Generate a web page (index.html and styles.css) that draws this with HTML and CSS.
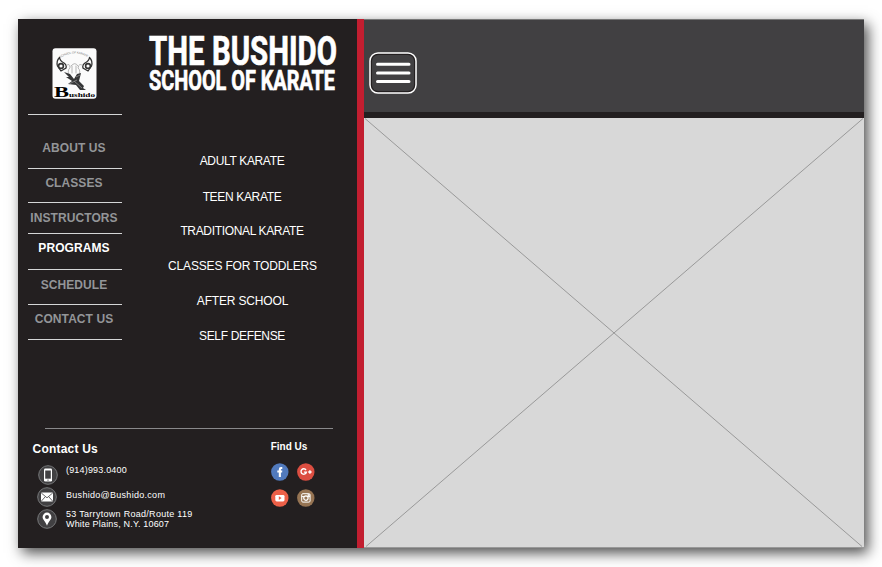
FILE: index.html
```html
<!DOCTYPE html>
<html lang="en">
<head>
<meta charset="utf-8">
<title>The Bushido School of Karate</title>
<link rel="stylesheet" href="styles.css">
</head>
<body>
<div class="app">
  <aside class="sidebar">
    <header class="brand">
      <svg class="logo" width="45" height="51" viewBox="0 0 45 51">
        <defs><path id="arc" d="M8 10Q22 1 37 10"/></defs>
        <rect x=".5" y=".2" width="44" height="50.6" rx="3" fill="#fbfbfb"/>
        <text class="logo-arc"><textPath href="#arc" textLength="29">SCHOOL OF KARATE</textPath></text>
        <g fill="none" stroke="#333" stroke-linecap="round">
          <path d="M7.5 9.5Q4 13 5.5 18L9 23L14 20Q15 17 12 15Q8 13 7.5 9.5M37.5 9.5Q41 13 39.5 18L36 23L31 20Q30 17 33 15Q37 13 37.5 9.5" stroke-width="1.3"/>
          <circle cx="9" cy="18" r="2.4" stroke-width="1.6"/><circle cx="36" cy="18" r="2.4" stroke-width="1.6"/>
          <path d="M14 18Q18 14 18 20Q15 22 17 28M31 18Q27 14 26 20Q29 22 27 28M19 18Q23 13 26 18M20 18V25M24 18V25" stroke="#999" stroke-width=".7"/>
        </g>
        <path d="M12 24L18 26L22 31L25 26L29 25L27 33L32 38L31 40L34 42L28 42L24 37L16 36L20 33L14 29L17 29Z" fill="#343536"/>
        <path d="M17 36L25 32M22 33L30 40M24 29L28 27" stroke="#999" stroke-width=".7"/>
        <text class="logo-b" x="2" y="48.7" textLength="15" lengthAdjust="spacingAndGlyphs">B</text>
        <text class="logo-name" x="17" y="48.7" textLength="26" lengthAdjust="spacingAndGlyphs">ushido</text>
      </svg>
      <svg class="title" width="200" height="66" viewBox="0 0 200 66">
        <text class="t1" x="5" y="37" textLength="188" lengthAdjust="spacingAndGlyphs">THE BUSHIDO</text>
        <text class="t2" x="5" y="61.5" textLength="186" lengthAdjust="spacingAndGlyphs">SCHOOL OF KARATE</text>
      </svg>
    </header>
    <div class="menus">
      <nav class="main-nav">
        <a class="about">ABOUT US</a>
        <a class="classes">CLASSES</a>
        <a class="instructors">INSTRUCTORS</a>
        <a class="programs">PROGRAMS</a>
        <a class="schedule">SCHEDULE</a>
        <a class="contact-link">CONTACT US</a>
      </nav>
      <nav class="sub-nav">
        <a class="tight">ADULT KARATE</a>
        <a class="tight teen">TEEN KARATE</a>
        <a class="tight">TRADITIONAL KARATE</a>
        <a>CLASSES FOR TODDLERS</a>
        <a>AFTER SCHOOL</a>
        <a class="tight">SELF DEFENSE</a>
      </nav>
    </div>
    <footer class="footer">
      <section class="contact">
        <h2>Contact Us</h2>
        <div class="row phone">
          <svg width="20" height="20" viewBox="0 0 20 20"><circle cx="10" cy="10" r="9.3" fill="#414042" stroke="#77787a"/><rect x="6" y="3.5" width="8" height="13" rx="1.2" fill="#fff"/><path d="M7.2 5.5H12.8V13.7H7.2Z" fill="#414042"/><circle cx="10" cy="15.1" r=".7" fill="#414042"/></svg>
          <span>(914)993.0400</span>
        </div>
        <div class="row mail">
          <svg width="20" height="20" viewBox="0 0 20 20"><circle cx="10" cy="10" r="9.3" fill="#414042" stroke="#77787a"/><rect x="4" y="5.6" width="12" height="9" rx=".8" fill="#fff"/><path d="M4.3 6L10 10.8L15.7 6M4.3 14.2L8.2 9.8M15.7 14.2L11.8 9.8" fill="none" stroke="#414042" stroke-width=".8"/></svg>
          <span>Bushido@Bushido.com</span>
        </div>
        <div class="row place">
          <svg width="20" height="20" viewBox="0 0 20 20"><circle cx="10" cy="10" r="9.3" fill="#414042" stroke="#77787a"/><path fill-rule="evenodd" d="M10 3.6A4.4 4.4 0 0 0 5.6 8C5.6 10.8 8.6 12.5 10 16.7C11.4 12.5 14.4 10.8 14.4 8A4.4 4.4 0 0 0 10 3.6ZM10 6A2 2 0 1 1 10 10A2 2 0 1 1 10 6Z" fill="#fff"/></svg>
          <span>53 Tarrytown Road/Route 119<br><i>White Plains, N.Y. 10607</i></span>
        </div>
      </section>
      <section class="find">
        <h3>Find Us</h3>
        <div class="social">
          <svg width="18" height="18" viewBox="0 0 18 18"><circle cx="8.8" cy="9" r="8.7" fill="#517abd"/><path d="M7.8 14V9.5H6.3V7.6H7.8V6.4Q7.8 4 10 4H11.3V5.9H10.6Q9.9 5.9 9.9 6.6V7.6H11.3L11.1 9.5H9.9V14Z" fill="#fff"/></svg>
          <svg width="18" height="18" viewBox="0 0 18 18"><circle cx="8.8" cy="9" r="8.7" fill="#dc4e41"/><path d="M9 7A2.7 2.7 0 1 0 9.4 9.1H6.9M11.2 9H14.6M12.9 7.3V10.7" fill="none" stroke="#fff" stroke-width="1.4"/></svg>
          <svg width="18" height="18" viewBox="0 0 18 18"><circle cx="8.8" cy="9" r="8.7" fill="#ec6048"/><rect x="4.3" y="5.9" width="9.2" height="6.5" rx="1.4" fill="#fff"/><path d="M7.8 7.3V11L10.6 9.1Z" fill="#ec6048"/></svg>
          <svg width="18" height="18" viewBox="0 0 18 18"><circle cx="8.8" cy="9" r="8.7" fill="#967453"/><rect x="4.7" y="4.7" width="8.4" height="8.4" rx="1.2" fill="none" stroke="#fff"/><path d="M4.8 7.6H13" stroke="#fff"/><circle cx="8.9" cy="9.1" r="2.2" fill="#967453" stroke="#fff" stroke-width="1.2"/><path d="M10.6 5.2H12.7V6.9H10.6Z" fill="#fff"/></svg>
        </div>
      </section>
    </footer>
  </aside>
  <div class="stripe"></div>
  <main class="main">
    <div class="topbar">
      <svg class="menu-btn" width="48" height="42" viewBox="0 0 48 42"><rect x="1" y="1" width="46" height="40" rx="8" fill="#231f20" stroke="#fff" stroke-width="1.5"/><rect x="3" y="3" width="42" height="36" rx="6" fill="#414042"/><path d="M8.5 12.3H40M8.5 21H40M8.5 29.6H40" stroke="#fff" stroke-width="3" stroke-linecap="round"/></svg>
    </div>
    <svg class="placeholder" width="500" height="429" viewBox="0 0 500 429"><path d="M1 .5L498 428.5M499 .5L2 428.5" stroke="#999" stroke-width="1"/></svg>
  </main>
</div>
</body>
</html>
```
FILE: styles.css
```css
* { box-sizing: border-box; }
body {
  margin: 0;
  padding: 19px 18px;
  height: 567px;
  overflow: hidden;
  background: #fff;
  font-family: "Liberation Sans", Arial, sans-serif;
}
.app {
  display: flex;
  width: 846px;
  height: 529px;
  box-shadow: 4px 5px 13px rgba(0, 0, 0, .7);
}
.sidebar {
  display: flex;
  flex-direction: column;
  width: 339px;
  background: #231f20;
}
.brand { display: flex; height: 94px; padding: 9px 0 0 34px; }
.logo { margin-top: 20px; }
.title { margin-left: 47px; overflow: visible; }
.title text {
  font-family: Roboto, sans-serif;
  font-weight: 700;
  fill: #fff;
  stroke: #fff;
  stroke-width: .7px;
}
.title .t1 { font-size: 40px; }
.title .t2 { font-size: 27px; }
.logo-arc { font: 3px "Liberation Sans", sans-serif; fill: #777; }
.logo-b { font: bold 14px "Liberation Serif", serif; }
.logo-name { font: bold 7px "Liberation Serif", serif; }
.menus { display: flex; height: 315px; padding-left: 10px; }
.main-nav {
  width: 93.5px;
  display: flex;
  flex-direction: column;
  border-top: 1px solid #d5d6d7;
  height: 226px;
  margin-top: 1px;
}
.main-nav a {
  display: flex;
  justify-content: center;
  padding-right: 1.5px;
  border-bottom: 1px solid #d5d6d7;
  color: #939598;
  font-size: 12px;
  font-weight: 700;
  letter-spacing: .08px;
  line-height: 14px;
  white-space: nowrap;
}
.about { height: 54px; padding-top: 26px; }
.classes { height: 34px; padding-top: 7px; }
.instructors { height: 31px; padding-top: 8px; }
.main-nav .programs { height: 36px; padding-top: 7px; color: #fff; }
.schedule { height: 35px; padding-top: 8px; }
.contact-link { height: 35px; padding-top: 7px; }
.sub-nav {
  display: flex;
  flex-direction: column;
  width: 200px;
  margin-left: 21px;
  padding-top: 41px;
}
.sub-nav a {
  height: 35px;
  line-height: 14px;
  font-size: 12px;
  letter-spacing: -.17px;
  color: #fff;
  text-align: center;
}
.sub-nav .tight { letter-spacing: -.34px; padding-right: 1px; }
.sub-nav .teen { padding-top: 1px; }
.footer {
  display: flex;
  position: relative;
  flex: 1;
  margin-left: 14px;
  color: #fff;
}
.footer::before {
  content: "";
  position: absolute;
  left: 13px;
  top: 0;
  width: 288px;
  height: 1px;
  background: #89898b;
}
.footer h2 { margin: 14px 0 9px; padding-left: .6px; font-size: 12px; line-height: 14px; letter-spacing: .2px; }
.contact { width: 238.7px; }
.row { display: flex; height: 22px; padding-left: 4.5px; gap: 9.5px; font-size: 9px; line-height: 10px; letter-spacing: .29px; }
.row i { font-style: normal; }
.row svg { flex: none; }
.phone { padding-left: 6.3px; gap: 7.7px; letter-spacing: .18px; }
.mail span { padding-top: 3px; }
.row i { letter-spacing: .18px; }
.find h3 { margin: 13px 0 10px; font-size: 10px; line-height: 12px; }
.social { display: grid; grid-template-columns: 18px 18px; gap: 8px; }
.stripe { width: 6.5px; background: #c21e30; }
.main { flex: 1; background: #d8d8d8; border-bottom: 1px solid #999; }
.topbar {
  height: 99px;
  padding: 32px 0 0 5.5px;
  border-top: 1px solid #777;
  border-bottom: 6px solid #231f20;
  background: #414042;
}
.placeholder { display: block; }
```
